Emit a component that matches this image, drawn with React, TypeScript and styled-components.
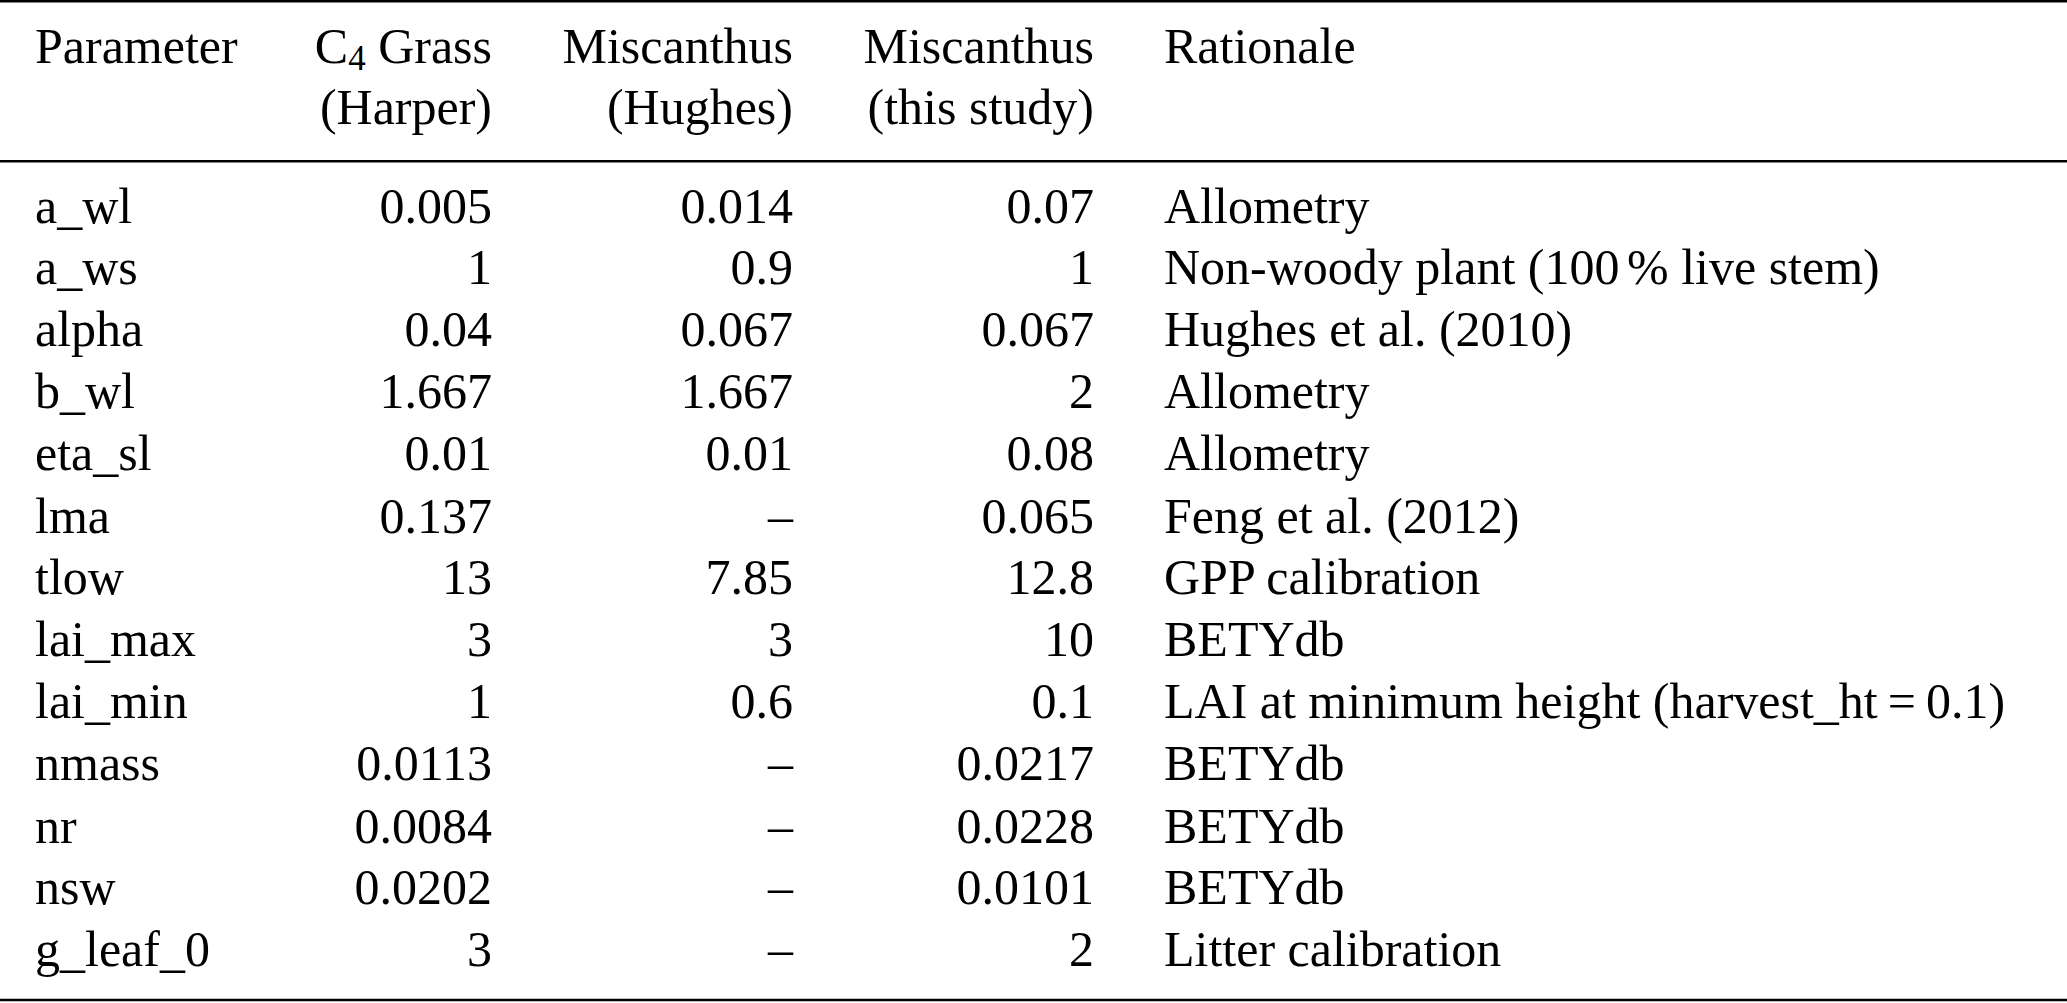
import React from 'react'
import styled, { createGlobalStyle } from 'styled-components'

// the sheet is set at 40px type and scaled up to the 50px of the reference
const SCALE = 1.25

const GlobalStyle = createGlobalStyle`
  html, body {
    margin: 0;
    padding: 0;
    background: #fff;
    height: 1003px;
    overflow: hidden;
  }
`

const Sheet = styled.div`
  width: 1653.6px;
  transform: scale(${SCALE});
  transform-origin: 0 0;
  border-top: 2.4px solid #000;
  border-bottom: 2.4px solid #000;
  font-family: "Liberation Serif", "Times New Roman", serif;
  font-size: 40px;
  line-height: 49.6px;
  color: #000;
`

const Grid = styled.div`
  display: grid;
  grid-template-columns: 216px 205.6px 240.8px 240.8px 1fr;
`

const Header = styled(Grid)`
  padding: 9.6px 0 16.8px;
  border-bottom: 2px solid #000;
`

const Body = styled(Grid)`
  padding: 10px 0 14.4px;
`

const Cell = styled.div<{ $align?: 'left' | 'right' }>`
  text-align: ${p => p.$align || 'left'};
  padding: 0 28px;
  white-space: nowrap;
`

const Sub = styled.span`
  font-size: 0.7em;
  line-height: 0;
  vertical-align: -0.22em;
`

const ThinSpace = styled.span`
  margin-left: -0.05em;
`

const Eq = styled.span`
  padding: 0 0.2em;
`

type RowData = [string, string, string, string, React.ReactNode]

const rows: RowData[] = [
  ['a_wl', '0.005', '0.014', '0.07', 'Allometry'],
  ['a_ws', '1', '0.9', '1', <>Non-woody plant (100<ThinSpace>&#8201;</ThinSpace>% live stem)</>],
  ['alpha', '0.04', '0.067', '0.067', 'Hughes et al. (2010)'],
  ['b_wl', '1.667', '1.667', '2', 'Allometry'],
  ['eta_sl', '0.01', '0.01', '0.08', 'Allometry'],
  ['lma', '0.137', '–', '0.065', 'Feng et al. (2012)'],
  ['tlow', '13', '7.85', '12.8', 'GPP calibration'],
  ['lai_max', '3', '3', '10', 'BETYdb'],
  ['lai_min', '1', '0.6', '0.1', <>LAI at minimum height (harvest_ht<Eq>=</Eq>0.1)</>],
  ['nmass', '0.0113', '–', '0.0217', 'BETYdb'],
  ['nr', '0.0084', '–', '0.0228', 'BETYdb'],
  ['nsw', '0.0202', '–', '0.0101', 'BETYdb'],
  ['g_leaf_0', '3', '–', '2', 'Litter calibration'],
]

const App = () => {
  return (
    <>
      <GlobalStyle />
      <Sheet>
        <Header>
          <Cell>Parameter</Cell>
          <Cell $align="right">
            C<Sub>4</Sub> Grass<br />(Harper)
          </Cell>
          <Cell $align="right">
            Miscanthus<br />(Hughes)
          </Cell>
          <Cell $align="right">
            Miscanthus<br />(this study)
          </Cell>
          <Cell>Rationale</Cell>
        </Header>
        <Body>
          {rows.map(([name, harper, hughes, study, why]) => (
            <React.Fragment key={name}>
              <Cell>{name}</Cell>
              <Cell $align="right">{harper}</Cell>
              <Cell $align="right">{hughes}</Cell>
              <Cell $align="right">{study}</Cell>
              <Cell>{why}</Cell>
            </React.Fragment>
          ))}
        </Body>
      </Sheet>
    </>
  )
}

export default App
